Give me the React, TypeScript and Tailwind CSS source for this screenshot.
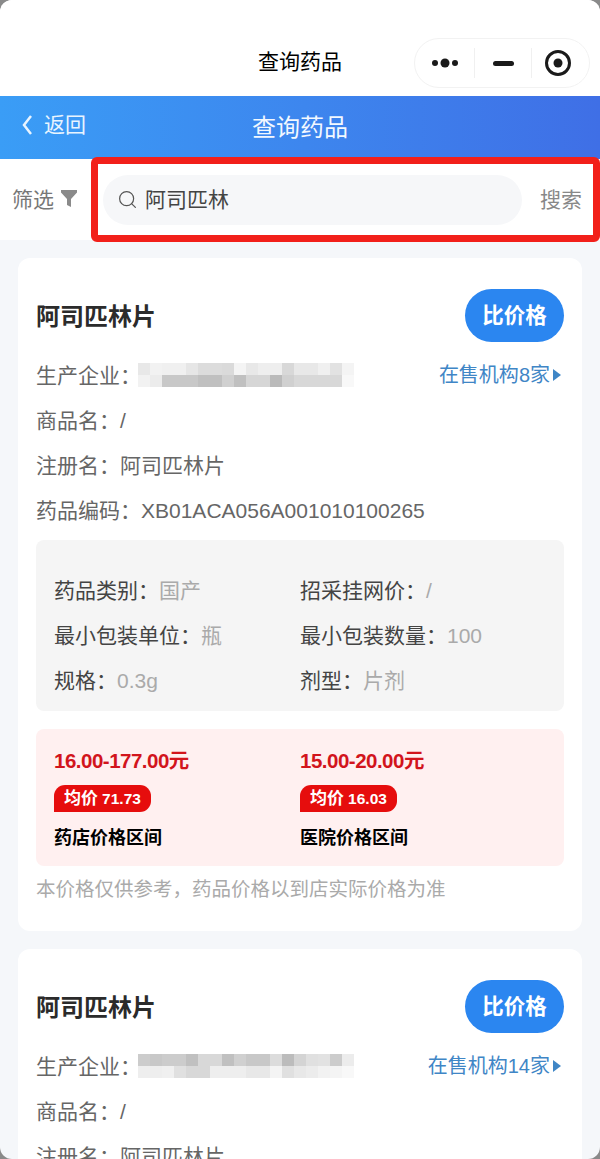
// 查询药品 - 药品搜索结果页
import { Search } from 'lucide-react'

interface Drug {
  sellers: number
  // 打码区域的灰度块
  mosaic: string[][]
  mosaicTop: string
}

const drugs: Drug[] = [
  {
    sellers: 8,
    mosaicTop: 'mt-[-2px]',
    mosaic: [
      ['#e8e8e8', '#f2f2f2', '#f0f0f0', '#f0f0f0', '#e6e6e6', '#dcdcdc', '#dcdcdc', '#dadada', '#f4f4f4', '#e8e8e8', '#eeeeee', '#eeeeee', '#d8d8d8', '#e8e8e8', '#e8e8e8', '#f0f0f0', '#e2e2e2', '#f4f4f4'],
      ['#f2f2f2', '#ececec', '#c8c8c8', '#c8c8c8', '#c8c8c8', '#c0c0c0', '#c0c0c0', '#d0d0d0', '#c0c0c0', '#d6d6d6', '#d6d6d6', '#bababa', '#d0d0d0', '#d8d8d8', '#d8d8d8', '#d8d8d8', '#d8d8d8', '#f8f8f8'],
    ],
  },
  {
    sellers: 14,
    mosaicTop: 'mt-[-2px]',
    mosaic: [
      ['#cccccc', '#c8c8c8', '#cccccc', '#cccccc', '#c0c0c0', '#d8d8d8', '#d8d8d8', '#c0c0c0', '#d0d0d0', '#c8c8c8', '#c8c8c8', '#dcdcdc', '#bcbcbc', '#d4d4d4', '#e0e0e0', '#e2e2e2', '#cccccc', '#ececec'],
      ['#eeeeee', '#eeeeee', '#f0f0f0', '#e0e0e0', '#d8d8d8', '#d8d8d8', '#eeeeee', '#eeeeee', '#eeeeee', '#e8e8e8', '#e8e8e8', '#f4f4f4', '#e0e0e0', '#e8e8e8', '#ececec', '#f2f2f2', '#f4f4f4', '#f8f8f8'],
    ],
  },
]

function Mosaic({ rows, className }: { rows: string[][]; className: string }) {
  return (
    <svg width="216" height="24" viewBox="0 0 216 24" className={`shrink-0 ml-[-3px] ${className}`}>
      {rows.map((row, y) =>
        row.map((c, x) => <rect key={`${x}-${y}`} x={x * 12} y={y * 12} width="12" height="12" fill={c} />)
      )}
    </svg>
  )
}

function SpecCell({ label, value }: { label: string; value: string }) {
  return (
    <div className="h-[45px] flex items-center whitespace-nowrap">
      <span className="text-[#444]">{label}：</span>
      <span className="text-[#aaa]">{value}</span>
    </div>
  )
}

function PriceCell({ range, avg, label }: { range: string; avg: string; label: string }) {
  return (
    <div>
      <div className="h-[24px] leading-[24px] text-[20.5px] font-bold text-[#d2141c] tracking-[-0.5px]">{range}</div>
      <div className="mt-[12px] w-[97px] h-[27px] flex items-center justify-center gap-[4px] bg-[#e60d0d] rounded-t-[11px] rounded-br-[11px] text-white font-bold">
        <span className="text-[17px]">均价</span>
        <span className="text-[15.5px]">{avg}</span>
      </div>
      <div className="mt-[13px] h-[26px] leading-[26px] text-[18px] font-bold text-black">{label}</div>
    </div>
  )
}

function DrugCard({ drug }: { drug: Drug }) {
  return (
    <div className="bg-white rounded-[12px] px-[18px] pt-[31px] pb-[29px] text-[21px] text-[#666]">
      <div className="flex items-center justify-between h-[53px]">
        <span className="pt-[3px] text-[24px] font-bold text-[#2b2b2b]">阿司匹林片</span>
        <button className="w-[99px] h-[53px] pt-[1px] rounded-full bg-[#2b86f0] text-white text-[21.5px] font-bold">比价格</button>
      </div>
      <div className="mt-[11px] h-[45px] flex items-center justify-between whitespace-nowrap">
        <div className="flex items-center">
          <span>生产企业：</span>
          <Mosaic rows={drug.mosaic} className={drug.mosaicTop} />
        </div>
        <div className="flex items-center gap-[3px] pr-[3px] mt-[-1px] text-[20px] text-[#3f86c6]">
          在售机构{drug.sellers}家
          <svg width="8" height="12" viewBox="0 0 8 12"><path d="M0 0l8 6-8 6z" fill="#3f86c6" /></svg>
        </div>
      </div>
      <div className="h-[45px] flex items-center">商品名：/</div>
      <div className="h-[45px] flex items-center">注册名：阿司匹林片</div>
      <div className="h-[45px] flex items-center">药品编码：XB01ACA056A001010100265</div>

      <div className="mt-[7px] bg-[#f5f5f5] rounded-[8px] pl-[18px] pt-[28px] pb-[8px] grid grid-cols-[246px_1fr]">
        <SpecCell label="药品类别" value="国产" />
        <SpecCell label="招采挂网价" value="/" />
        <SpecCell label="最小包装单位" value="瓶" />
        <SpecCell label="最小包装数量" value="100" />
        <SpecCell label="规格" value="0.3g" />
        <SpecCell label="剂型" value="片剂" />
      </div>

      <div className="mt-[18px] bg-[#fff0f0] rounded-[8px] pl-[18px] pt-[20px] pb-[16px] h-[137px] grid grid-cols-[246px_1fr]">
        <PriceCell range="16.00-177.00元" avg="71.73" label="药店价格区间" />
        <PriceCell range="15.00-20.00元" avg="16.03" label="医院价格区间" />
      </div>

      <div className="mt-[10px] h-[26px] leading-[26px] text-[19.5px] text-[#aaa] whitespace-nowrap">
        本价格仅供参考，药品价格以到店实际价格为准
      </div>
    </div>
  )
}

export default function App() {
  return (
    <div
      className="w-[600px] h-[1159px] overflow-hidden bg-[#8a8a8a]"
      style={{ fontFamily: '"Liberation Sans", "Noto Sans CJK SC", sans-serif' }}
    >
      <div className="relative h-full overflow-hidden rounded-[12px] bg-[#f5f7fa]">
        {/* 小程序顶栏 */}
        <div className="relative h-[96px] bg-white">
          <div className="absolute left-0 right-0 top-[48px] text-center text-[21px] leading-[28px] text-black">查询药品</div>
          <div className="absolute left-[414px] top-[38px] w-[176px] h-[50px] rounded-full border border-[#f2f2f2] flex items-center">
            <div className="w-[59px] flex items-center justify-center">
              <svg width="26" height="12" viewBox="0 0 26 12" fill="#1a1a1a">
                <circle cx="3" cy="6" r="3" />
                <circle cx="13" cy="6" r="4.5" />
                <circle cx="23" cy="6" r="3" />
              </svg>
            </div>
            <div className="w-px h-[30px] bg-[#f0f0f0]" />
            <div className="w-[56px] flex items-center justify-center">
              <div className="w-[21px] h-[5px] rounded-full bg-[#1a1a1a]" />
            </div>
            <div className="w-px h-[30px] bg-[#f0f0f0]" />
            <div className="flex-1 pr-[6px] flex items-center justify-center">
              <svg width="26" height="26" viewBox="0 0 26 26">
                <circle cx="13" cy="13" r="11.5" fill="none" stroke="#1a1a1a" strokeWidth="3" />
                <circle cx="13" cy="13" r="4.5" fill="#1a1a1a" />
              </svg>
            </div>
          </div>
        </div>

        {/* 蓝色标题栏 */}
        <div className="relative h-[63px] pt-[1px] bg-gradient-to-r from-[#3a9df6] to-[#3f6fe6] flex items-center justify-center text-white">
          <div className="absolute left-[22px] top-[14px] flex items-center gap-[12px] text-[21px] leading-[30px] text-[#e8f4ff]">
            <svg width="10" height="20" viewBox="0 0 10 20" fill="none" stroke="#e8f4ff" strokeWidth="2.5">
              <path d="M9 1L2 10l7 9" />
            </svg>
            返回
          </div>
          <span className="text-[24px] text-[#f2f8ff]">查询药品</span>
        </div>

        {/* 搜索栏 */}
        <div className="relative h-[81px] bg-white flex items-center">
          <div className="w-[103px] pl-[12px] flex items-center gap-[7px] text-[#777] text-[21px]">
            筛选
            <svg width="16" height="17" viewBox="0 0 16 17" fill="#8a8a8a" className="shrink-0 -mt-[2px]">
              <path d="M0 0h16v2.5L10 9v8l-4-2V9L0 2.5z" />
            </svg>
          </div>
          <div className="w-[419px] h-[50px] rounded-full bg-[#f6f7f9] flex items-center pl-[14px] gap-[7px] text-[21px] text-[#444]">
            <Search size={21} strokeWidth={1.4} className="text-[#555]" />
            阿司匹林
          </div>
          <span className="ml-[18px] text-[21px] text-[#888]">搜索</span>
          {/* 截图上的红框标注 */}
          <div className="absolute left-[91px] top-[-2px] w-[509px] h-[85px] border-[7px] border-[#f2201a] rounded-[6px]" />
        </div>

        {/* 列表 */}
        <div className="px-[18px] pt-[18px] flex flex-col gap-[18px]">
          {drugs.map((drug) => (
            <DrugCard key={drug.sellers} drug={drug} />
          ))}
        </div>
      </div>
    </div>
  )
}
